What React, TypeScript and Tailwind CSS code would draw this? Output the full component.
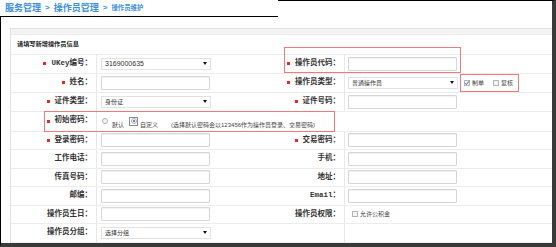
import { ReactNode } from 'react'

const labelFont = "font-[family-name:'Liberation_Mono','Noto_Sans_CJK_SC',monospace]"
const textFont = "font-[family-name:'Liberation_Sans','Noto_Sans_CJK_SC',sans-serif]"

function Star() {
  return <span className="inline-block w-[3px] h-[3px] bg-[#e8262c] mr-[5px]" />
}

function Label({ text, star }: { text: string; star?: boolean }) {
  return (
    <div
      className={`w-[85px] flex items-center justify-end pr-[4px] text-[7.5px] leading-none font-bold text-[#333] ${labelFont}`}
    >
      {star && <Star />}
      <span>{text}</span>
    </div>
  )
}

function Label2({ text, star }: { text: string; star?: boolean }) {
  return (
    <div
      className={`w-[94px] flex items-center justify-end pr-[4px] text-[7.5px] leading-none font-bold text-[#333] ${labelFont}`}
    >
      {star && <Star />}
      <span>{text}</span>
    </div>
  )
}

function Input() {
  return <div className="w-[109px] h-[14px] border border-[#d6d6d6] rounded-[1px] bg-white shadow-[inset_0_1px_1px_rgba(0,0,0,0.06)]" />
}

function Select({ value, digits }: { value: string; digits?: boolean }) {
  return (
    <div className="w-[110px] h-[12px] border border-[#e2e2e2] bg-white flex items-center justify-between pl-[3px] pr-[3px]">
      <span className={`${digits ? 'text-[7px]' : 'text-[6px]'} leading-none text-[#333] ${textFont}`}>{value}</span>
      <span className="w-0 h-0 border-l-[2px] border-r-[2px] border-t-[3px] border-l-transparent border-r-transparent border-t-[#111]" />
    </div>
  )
}

function Checkbox({ checked }: { checked?: boolean }) {
  return (
    <span className="relative inline-block w-[6px] h-[6px] border border-[#b5b5b5] bg-[#f4f4f4]">
      {checked && (
        <svg viewBox="0 0 6 6" className="absolute -left-[1px] -top-[1px] w-[6px] h-[6px]">
          <path d="M1 3.2 L2.4 4.6 L5 1.2" fill="none" stroke="#2f5fb8" strokeWidth="1" />
        </svg>
      )}
    </span>
  )
}

function Radio({ checked }: { checked?: boolean }) {
  return (
    <span className="inline-flex items-center justify-center w-[6px] h-[6px] rounded-full border border-[#b0b0b0] bg-[#f5f5f5]">
      {checked && <span className="w-[2px] h-[2px] rounded-full bg-[#2c6cc4]" />}
    </span>
  )
}

function Cell2({ children }: { children?: ReactNode }) {
  return <div className="w-[154px] border-l border-[#e8e8e8] flex items-center pl-[4px]">{children}</div>
}

function Cell4({ children }: { children?: ReactNode }) {
  return <div className="flex-1 border-l border-[#e8e8e8] flex items-center pl-[3px]">{children}</div>
}

function Small({ children }: { children: ReactNode }) {
  return <span className={`text-[6px] leading-none text-[#444] ${textFont}`}>{children}</span>
}

const row = 'flex border-b border-[#ececec]'

export default function App() {
  return (
    <div className="relative w-[556px] h-[247px] bg-white flex flex-col overflow-hidden">
      <div className="flex h-[17px] shrink-0">
        <div
          className={`w-[278px] border-b border-black flex items-center pl-[5px] gap-[4px] text-[#3a8fdc] font-bold leading-none ${textFont}`}
        >
          <span className="text-[9px]">服务管理</span>
          <span className="text-[8px]">&gt;</span>
          <span className="text-[9px]">操作员管理</span>
          <span className="text-[8px]">&gt;</span>
          <span className="text-[6.4px]">操作员维护</span>
        </div>
        <div className="flex-1 border-t border-black border-r-[4px] border-r-[#3a3a3a]" />
      </div>

      <div className="flex-1 border-l border-black border-r-[4px] border-r-[#3a3a3a] border-b-[4px] border-b-[#3a3a3a] pl-[9px] pt-[11px]">
        <div className="h-full border-l border-t border-[#e2e2e2] flex flex-col">
          <div className="h-[6px] bg-[#f3f3f3] border-b border-[#ececec]" />
          <div className={`${row} h-[20px] items-center pl-[6px]`}>
            <span className={`text-[6.2px] leading-none font-bold text-[#222] ${textFont}`}>请填写新增操作员信息</span>
          </div>

          <div className={`${row} h-[18.5px]`}>
            <Label text="UKey编号：" star />
            <Cell2>
              <Select value="3169000635" digits />
            </Cell2>
            <Label2 text="操作员代码：" star />
            <Cell4>
              <Input />
            </Cell4>
          </div>

          <div className={`${row} h-[19.5px]`}>
            <Label text="姓名：" star />
            <Cell2>
              <Input />
            </Cell2>
            <Label2 text="操作员类型：" star />
            <Cell4>
              <Select value="普通操作员" />
              <span className="ml-[6px] flex items-center gap-[2px]">
                <Checkbox checked />
                <Small>制单</Small>
              </span>
              <span className="ml-[9px] flex items-center gap-[2px]">
                <Checkbox />
                <Small>复核</Small>
              </span>
            </Cell4>
          </div>

          <div className={`${row} h-[18.5px]`}>
            <Label text="证件类型：" star />
            <Cell2>
              <Select value="身份证" />
            </Cell2>
            <Label2 text="证件号码：" star />
            <Cell4>
              <Input />
            </Cell4>
          </div>

          <div className={`${row} h-[20px]`}>
            <Label text="初始密码：" star />
            <div className="flex-1 border-l border-[#e8e8e8] flex items-center pl-[5px]">
              <Radio />
              <span className="ml-[4px]">
                <Small>默认</Small>
              </span>
              <span className="ml-[5px] w-[9px] h-[9px] border border-[#8a8a8a] flex items-center justify-center">
                <Radio checked />
              </span>
              <span className="ml-[2px]">
                <Small>自定义</Small>
              </span>
              <span className="ml-[13px]">
                <Small>(选择默认密码会以123456作为操作员登录、交易密码)</Small>
              </span>
            </div>
          </div>

          <div className={`${row} h-[18.5px]`}>
            <Label text="登录密码：" star />
            <Cell2>
              <Input />
            </Cell2>
            <Label2 text="交易密码：" star />
            <Cell4>
              <Input />
            </Cell4>
          </div>

          <div className={`${row} h-[18.5px]`}>
            <Label text="工作电话：" />
            <Cell2>
              <Input />
            </Cell2>
            <Label2 text="手机：" />
            <Cell4>
              <Input />
            </Cell4>
          </div>

          <div className={`${row} h-[18.5px]`}>
            <Label text="传真号码：" />
            <Cell2>
              <Input />
            </Cell2>
            <Label2 text="地址：" />
            <Cell4>
              <Input />
            </Cell4>
          </div>

          <div className={`${row} h-[18.5px]`}>
            <Label text="邮编：" />
            <Cell2>
              <Input />
            </Cell2>
            <Label2 text="Email：" />
            <Cell4>
              <Input />
            </Cell4>
          </div>

          <div className={`${row} h-[18.5px]`}>
            <Label text="操作员生日：" />
            <Cell2>
              <Input />
            </Cell2>
            <Label2 text="操作员权限：" />
            <Cell4>
              <span className="ml-[4px] flex items-center gap-[2px]">
                <Checkbox />
                <Small>允许公积金</Small>
              </span>
            </Cell4>
          </div>

          <div className={`${row} h-[18.5px]`}>
            <Label text="操作员分组：" />
            <Cell2>
              <Select value="选择分组" />
            </Cell2>
            <Label2 text="" />
            <Cell4 />
          </div>
        </div>
      </div>

      {/* red annotation boxes */}
      <div className="absolute left-[284px] top-[47px] w-[177px] h-[26px] border-[1.5px] border-[#f07a7a]" />
      <div className="absolute left-[460px] top-[74px] w-[59px] h-[18px] border-[1.5px] border-[#f07a7a]" />
      <div className="absolute left-[44px] top-[111px] w-[291px] h-[21px] border-[1.5px] border-[#f07a7a]" />
    </div>
  )
}
